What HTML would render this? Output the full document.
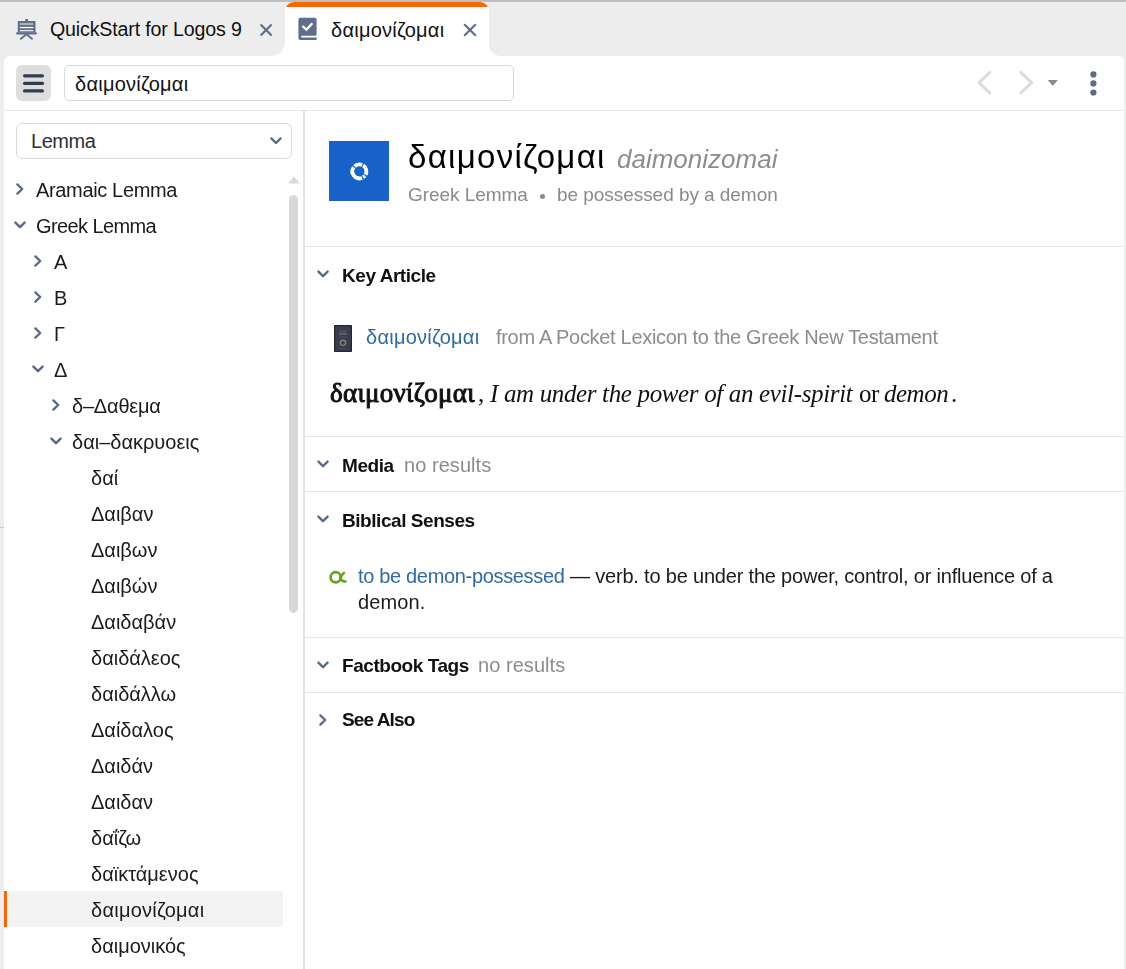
<!DOCTYPE html>
<html><head><meta charset="utf-8"><style>
html,body{margin:0;padding:0}
body{width:1126px;height:969px;overflow:hidden;position:relative;background:#ededed;font-family:"Liberation Sans", sans-serif}
.t{position:absolute;white-space:nowrap}
.g{will-change:transform}
.b{position:absolute}
svg.b{overflow:visible}
</style></head><body>
<div class="b" style="left:0px;top:0px;width:1126px;height:2px;background:#bebebe"></div>
<div class="b" style="left:265px;top:30px;width:245px;height:30px;background:#fff"></div>
<div class="b" style="left:0px;top:2px;width:285px;height:54px;background:#ededed;border-bottom-right-radius:14px"></div>
<div class="b" style="left:489px;top:2px;width:637px;height:54px;background:#ededed;border-bottom-left-radius:12px"></div>
<div class="b" style="left:285px;top:2px;width:204px;height:56px;background:#fff;border-radius:9px 9px 0 0;overflow:hidden"><div style="position:absolute;left:0;top:0;width:204px;height:5px;background:#f86600"></div></div>
<div class="b" style="left:4px;top:56px;width:1120px;height:913px;background:#fff;border-radius:6px 5px 0 0"></div>
<svg class="b" style="left:14px;top:17px" width="26" height="24" viewBox="14 17 26 24">
<g fill="#5f6e8a">
<rect x="25.3" y="19" width="2.7" height="2.4"/>
<rect x="17.8" y="21" width="17.7" height="11.6" rx="0.6"/>
<rect x="16.2" y="32.3" width="20.7" height="2.3" rx="0.8"/>
</g>
<rect x="19.8" y="23.1" width="13.5" height="1.8" fill="#b3bac8"/>
<rect x="19.8" y="26.9" width="13.5" height="1.3" fill="#fff"/>
<rect x="19.8" y="30.0" width="13.5" height="1.3" fill="#e8eaee"/>
<path d="M26.4 34.2 L20.9 38.8 M26.4 34.2 L32.0 38.8" stroke="#5f6e8a" stroke-width="1.9" stroke-linecap="round"/>
</svg>
<div class="t" style="left:50px;top:20.31px;font-family:'Liberation Sans', sans-serif;font-size:19.6px;line-height:19.6px;font-weight:normal;font-style:normal;color:#111;letter-spacing:-0.15px;">QuickStart for Logos 9</div>
<svg class="b" style="left:258px;top:22px" width="16" height="16" viewBox="0 0 16 16">
<path d="M2.6 2.4 L13.6 13.6 M13.6 2.4 L2.6 13.6" stroke="#5f6e8a" stroke-width="2.2"/></svg>
<svg class="b" style="left:296px;top:15px" width="24" height="28" viewBox="296 15 24 28">
<path d="M300.3 17.8 H315.1 Q316.6 17.8 316.6 19.3 V34.3 Q316.6 35.8 315.1 35.8 H301.3 V37.4 H316.6 V40 H300.3 Q298.4 40 298.4 38.1 V19.7 Q298.4 17.8 300.3 17.8 Z" fill="#5f6e8a"/>
<path d="M302.4 26 L306.4 29.6 L312.4 23.3" stroke="#fff" stroke-width="2.3" fill="none"/>
</svg>
<div class="t" style="left:331px;top:19.77px;font-family:'Liberation Sans', sans-serif;font-size:20px;line-height:20px;font-weight:normal;font-style:normal;color:#111;letter-spacing:0.25px;">δαιμονίζομαι</div>
<svg class="b" style="left:462px;top:22px" width="16" height="16" viewBox="0 0 16 16">
<path d="M2.2 2.2 L13.8 13.8 M13.8 2.2 L2.2 13.8" stroke="#5f6e8a" stroke-width="2.2"/></svg>
<div class="b" style="left:16px;top:65px;width:35px;height:36px;background:#dedede;border-radius:6px"></div>
<svg class="b" style="left:16px;top:65px" width="35" height="36" viewBox="16 65 35 36"><line x1="24.6" y1="75.8" x2="42.4" y2="75.8" stroke="#323c50" stroke-width="3.3" stroke-linecap="round"/><line x1="24.6" y1="83.4" x2="42.4" y2="83.4" stroke="#323c50" stroke-width="3.3" stroke-linecap="round"/><line x1="24.6" y1="90.9" x2="42.4" y2="90.9" stroke="#323c50" stroke-width="3.3" stroke-linecap="round"/></svg>
<div class="b" style="left:64px;top:65px;width:450px;height:36px;border:1px solid #d9d9d9;border-radius:5px;box-sizing:border-box;background:#fff"></div>
<div class="t" style="left:75px;top:73.97px;font-family:'Liberation Sans', sans-serif;font-size:20px;line-height:20px;font-weight:normal;font-style:normal;color:#111;letter-spacing:0.25px;">δαιμονίζομαι</div>
<svg class="b" style="left:970px;top:66px" width="100" height="34" viewBox="970 66 100 34">
<path d="M989.8 72.4 L979 82.7 L989.8 93" stroke="#dcdcdc" stroke-width="3" fill="none" stroke-linecap="round" stroke-linejoin="round"/>
<path d="M1020.8 72.4 L1031.6 82.7 L1020.8 93" stroke="#dcdcdc" stroke-width="3" fill="none" stroke-linecap="round" stroke-linejoin="round"/>
<path d="M1047.8 80 H1057.8 L1052.8 86 Z" fill="#8c8c8c"/>
</svg>
<svg class="b" style="left:1085px;top:66px" width="18" height="34" viewBox="1085 66 18 34"><circle cx="1093.4" cy="74.4" r="3.1" fill="#5b6a87"/><circle cx="1093.4" cy="83.4" r="3.1" fill="#5b6a87"/><circle cx="1093.4" cy="92.5" r="3.1" fill="#5b6a87"/></svg>
<div class="b" style="left:4px;top:110px;width:1120px;height:1px;background:#e6e6e6"></div>
<div class="b" style="left:303px;top:111px;width:2px;height:858px;background:#e3e3e3"></div>
<div class="b" style="left:16px;top:123px;width:276px;height:36px;border:1px solid #d9d9d9;border-radius:6px;box-sizing:border-box"></div>
<div class="t" style="left:31px;top:130.97px;font-family:'Liberation Sans', sans-serif;font-size:20px;line-height:20px;font-weight:normal;font-style:normal;color:#2b303b;letter-spacing:-0.45px;">Lemma</div>
<svg class="b" style="left:268px;top:134px" width="16" height="12" viewBox="268 134 16 12">
<path d="M271.3 138.4 L276 143 L280.6 138.4" stroke="#566783" stroke-width="2.2" fill="none" stroke-linecap="round" stroke-linejoin="round"/></svg>
<svg class="b" style="left:286px;top:174px" width="16" height="12" viewBox="286 174 16 12">
<path d="M288.2 183.6 L294 176.6 L299.8 183.6 Z" fill="#d9d9d9"/></svg>
<div class="b" style="left:289px;top:195px;width:9px;height:418px;background:#d8d8d8;border-radius:4.5px"></div>
<div class="b" style="left:0px;top:527px;width:4px;height:1px;background:#c6c6c6"></div>
<div class="b" style="left:4px;top:891px;width:279px;height:36px;background:#f3f3f3"></div>
<div class="b" style="left:4px;top:891px;width:3px;height:36px;background:#f86600"></div>
<svg class="b" style="left:14px;top:181.8px" width="12" height="14" viewBox="14 181.8 12 14"><path d="M17.4 184.20000000000002 L22.2 188.8 L17.4 193.4" stroke="#5a6b88" stroke-width="2.4" fill="none" stroke-linecap="round" stroke-linejoin="round"/></svg>
<div class="t g" style="left:36px;top:179.87px;font-family:'Liberation Sans', sans-serif;font-size:20px;line-height:20px;font-weight:normal;font-style:normal;color:#1b1b1b;letter-spacing:-0.35px;">Aramaic Lemma</div>
<svg class="b" style="left:13px;top:218.8px" width="14" height="12" viewBox="13 218.8 14 12"><path d="M15.4 222.4 L20 227.0 L24.6 222.4" stroke="#5a6b88" stroke-width="2.4" fill="none" stroke-linecap="round" stroke-linejoin="round"/></svg>
<div class="t g" style="left:36px;top:215.87px;font-family:'Liberation Sans', sans-serif;font-size:20px;line-height:20px;font-weight:normal;font-style:normal;color:#1b1b1b;letter-spacing:-0.6px;">Greek Lemma</div>
<svg class="b" style="left:32px;top:253.8px" width="12" height="14" viewBox="32 253.8 12 14"><path d="M35.4 256.2 L40.2 260.8 L35.4 265.40000000000003" stroke="#5a6b88" stroke-width="2.4" fill="none" stroke-linecap="round" stroke-linejoin="round"/></svg>
<div class="t g" style="left:54px;top:251.87px;font-family:'Liberation Sans', sans-serif;font-size:20px;line-height:20px;font-weight:normal;font-style:normal;color:#1b1b1b;letter-spacing:0px;">Α</div>
<svg class="b" style="left:32px;top:289.8px" width="12" height="14" viewBox="32 289.8 12 14"><path d="M35.4 292.2 L40.2 296.8 L35.4 301.40000000000003" stroke="#5a6b88" stroke-width="2.4" fill="none" stroke-linecap="round" stroke-linejoin="round"/></svg>
<div class="t g" style="left:54px;top:287.87px;font-family:'Liberation Sans', sans-serif;font-size:20px;line-height:20px;font-weight:normal;font-style:normal;color:#1b1b1b;letter-spacing:0px;">Β</div>
<svg class="b" style="left:32px;top:325.8px" width="12" height="14" viewBox="32 325.8 12 14"><path d="M35.4 328.2 L40.2 332.8 L35.4 337.40000000000003" stroke="#5a6b88" stroke-width="2.4" fill="none" stroke-linecap="round" stroke-linejoin="round"/></svg>
<div class="t g" style="left:54px;top:323.87px;font-family:'Liberation Sans', sans-serif;font-size:20px;line-height:20px;font-weight:normal;font-style:normal;color:#1b1b1b;letter-spacing:0px;">Γ</div>
<svg class="b" style="left:31px;top:362.8px" width="14" height="12" viewBox="31 362.8 14 12"><path d="M33.4 366.40000000000003 L38 371.0 L42.6 366.40000000000003" stroke="#5a6b88" stroke-width="2.4" fill="none" stroke-linecap="round" stroke-linejoin="round"/></svg>
<div class="t g" style="left:54px;top:359.87px;font-family:'Liberation Sans', sans-serif;font-size:20px;line-height:20px;font-weight:normal;font-style:normal;color:#1b1b1b;letter-spacing:0px;">Δ</div>
<svg class="b" style="left:50px;top:397.8px" width="12" height="14" viewBox="50 397.8 12 14"><path d="M53.4 400.2 L58.2 404.8 L53.4 409.40000000000003" stroke="#5a6b88" stroke-width="2.4" fill="none" stroke-linecap="round" stroke-linejoin="round"/></svg>
<div class="t g" style="left:72px;top:395.87px;font-family:'Liberation Sans', sans-serif;font-size:20px;line-height:20px;font-weight:normal;font-style:normal;color:#1b1b1b;letter-spacing:-0.2px;">δ–Δαθεμα</div>
<svg class="b" style="left:49px;top:434.8px" width="14" height="12" viewBox="49 434.8 14 12"><path d="M51.4 438.40000000000003 L56 443.0 L60.6 438.40000000000003" stroke="#5a6b88" stroke-width="2.4" fill="none" stroke-linecap="round" stroke-linejoin="round"/></svg>
<div class="t g" style="left:72px;top:431.87px;font-family:'Liberation Sans', sans-serif;font-size:20px;line-height:20px;font-weight:normal;font-style:normal;color:#1b1b1b;letter-spacing:0px;">δαι–δακρυοεις</div>
<div class="t g" style="left:90.7px;top:467.87px;font-family:'Liberation Sans', sans-serif;font-size:20px;line-height:20px;font-weight:normal;font-style:normal;color:#1b1b1b;letter-spacing:0px;">δαί</div>
<div class="t g" style="left:90.7px;top:503.87px;font-family:'Liberation Sans', sans-serif;font-size:20px;line-height:20px;font-weight:normal;font-style:normal;color:#1b1b1b;letter-spacing:0px;">Δαιβαν</div>
<div class="t g" style="left:90.7px;top:539.87px;font-family:'Liberation Sans', sans-serif;font-size:20px;line-height:20px;font-weight:normal;font-style:normal;color:#1b1b1b;letter-spacing:0px;">Δαιβων</div>
<div class="t g" style="left:90.7px;top:575.87px;font-family:'Liberation Sans', sans-serif;font-size:20px;line-height:20px;font-weight:normal;font-style:normal;color:#1b1b1b;letter-spacing:0px;">Δαιβών</div>
<div class="t g" style="left:90.7px;top:611.87px;font-family:'Liberation Sans', sans-serif;font-size:20px;line-height:20px;font-weight:normal;font-style:normal;color:#1b1b1b;letter-spacing:0px;">Δαιδαβάν</div>
<div class="t g" style="left:90.7px;top:647.87px;font-family:'Liberation Sans', sans-serif;font-size:20px;line-height:20px;font-weight:normal;font-style:normal;color:#1b1b1b;letter-spacing:0px;">δαιδάλεος</div>
<div class="t g" style="left:90.7px;top:683.87px;font-family:'Liberation Sans', sans-serif;font-size:20px;line-height:20px;font-weight:normal;font-style:normal;color:#1b1b1b;letter-spacing:0px;">δαιδάλλω</div>
<div class="t g" style="left:90.7px;top:719.87px;font-family:'Liberation Sans', sans-serif;font-size:20px;line-height:20px;font-weight:normal;font-style:normal;color:#1b1b1b;letter-spacing:0px;">Δαίδαλος</div>
<div class="t g" style="left:90.7px;top:755.87px;font-family:'Liberation Sans', sans-serif;font-size:20px;line-height:20px;font-weight:normal;font-style:normal;color:#1b1b1b;letter-spacing:0px;">Δαιδάν</div>
<div class="t g" style="left:90.7px;top:791.87px;font-family:'Liberation Sans', sans-serif;font-size:20px;line-height:20px;font-weight:normal;font-style:normal;color:#1b1b1b;letter-spacing:0px;">Δαιδαν</div>
<div class="t g" style="left:90.7px;top:827.87px;font-family:'Liberation Sans', sans-serif;font-size:20px;line-height:20px;font-weight:normal;font-style:normal;color:#1b1b1b;letter-spacing:0px;">δαΐζω</div>
<div class="t g" style="left:90.7px;top:863.87px;font-family:'Liberation Sans', sans-serif;font-size:20px;line-height:20px;font-weight:normal;font-style:normal;color:#1b1b1b;letter-spacing:0px;">δαϊκτάμενος</div>
<div class="t g" style="left:90.7px;top:899.87px;font-family:'Liberation Sans', sans-serif;font-size:20px;line-height:20px;font-weight:normal;font-style:normal;color:#1b1b1b;letter-spacing:0.25px;">δαιμονίζομαι</div>
<div class="t g" style="left:90.7px;top:935.87px;font-family:'Liberation Sans', sans-serif;font-size:20px;line-height:20px;font-weight:normal;font-style:normal;color:#1b1b1b;letter-spacing:0px;">δαιμονικός</div>
<div class="b" style="left:329px;top:141px;width:60px;height:60px;background:#1662c8"></div>
<svg class="b" style="left:347px;top:159px" width="25" height="25" viewBox="347 159 25 25"><path d="M354.54 166.36 A7 7 0 0 1 362.02 164.91 M363.11 165.46 A7 7 0 0 1 365.52 174.79 M364.84 175.81 A7 7 0 0 1 363.11 177.34 M362.02 177.89 A7 7 0 0 1 353.74 167.29" stroke="#fff" stroke-width="3.8" fill="none"/></svg>
<div class="t g" style="left:408px;top:140.36px;font-family:'Liberation Sans', sans-serif;font-size:33px;line-height:33px;font-weight:normal;font-style:normal;color:#000;letter-spacing:1.3px;">δαιμονίζομαι</div>
<div class="t g" style="left:617px;top:145.89px;font-family:'Liberation Sans', sans-serif;font-size:26px;line-height:26px;font-weight:normal;font-style:italic;color:#8c8c8c;letter-spacing:0px;">daimonizomai</div>
<div class="t g" style="left:407.5px;top:185.21px;font-family:'Liberation Sans', sans-serif;font-size:19px;line-height:19px;font-weight:normal;font-style:normal;color:#8a8a8a;letter-spacing:-0.05px;">Greek Lemma</div>
<div class="b" style="left:540.2px;top:194px;width:5px;height:5px;background:#8a8a8a;border-radius:50%"></div>
<div class="t g" style="left:557px;top:185.21px;font-family:'Liberation Sans', sans-serif;font-size:19px;line-height:19px;font-weight:normal;font-style:normal;color:#8a8a8a;letter-spacing:-0.05px;">be possessed by a demon</div>
<div class="b" style="left:305px;top:246px;width:819px;height:1px;background:#e6e6e6"></div>
<div class="b" style="left:305px;top:436px;width:819px;height:1px;background:#e6e6e6"></div>
<div class="b" style="left:305px;top:491px;width:819px;height:1px;background:#e6e6e6"></div>
<div class="b" style="left:305px;top:637px;width:819px;height:1px;background:#e6e6e6"></div>
<div class="b" style="left:305px;top:692px;width:819px;height:1px;background:#e6e6e6"></div>
<svg class="b" style="left:316px;top:267.7px" width="14" height="12" viewBox="316 267.7 14 12"><path d="M318.4 271.3 L323 275.9 L327.6 271.3" stroke="#5a6b88" stroke-width="2.4" fill="none" stroke-linecap="round" stroke-linejoin="round"/></svg>
<div class="t g" style="left:342px;top:265.81px;font-family:'Liberation Sans', sans-serif;font-size:19px;line-height:19px;font-weight:bold;font-style:normal;color:#111;letter-spacing:-0.45px;">Key Article</div>
<svg class="b" style="left:316px;top:457.8px" width="14" height="12" viewBox="316 457.8 14 12"><path d="M318.4 461.40000000000003 L323 466.0 L327.6 461.40000000000003" stroke="#5a6b88" stroke-width="2.4" fill="none" stroke-linecap="round" stroke-linejoin="round"/></svg>
<div class="t g" style="left:342px;top:455.91px;font-family:'Liberation Sans', sans-serif;font-size:19px;line-height:19px;font-weight:bold;font-style:normal;color:#111;letter-spacing:-0.45px;">Media</div>
<div class="t g" style="left:403.5px;top:455.07px;font-family:'Liberation Sans', sans-serif;font-size:20px;line-height:20px;font-weight:normal;font-style:normal;color:#8c8c8c;letter-spacing:0.05px;">no results</div>
<svg class="b" style="left:316px;top:513px" width="14" height="12" viewBox="316 513 14 12"><path d="M318.4 516.6 L323 521.2 L327.6 516.6" stroke="#5a6b88" stroke-width="2.4" fill="none" stroke-linecap="round" stroke-linejoin="round"/></svg>
<div class="t g" style="left:342px;top:510.61px;font-family:'Liberation Sans', sans-serif;font-size:19px;line-height:19px;font-weight:bold;font-style:normal;color:#111;letter-spacing:-0.45px;">Biblical Senses</div>
<svg class="b" style="left:316px;top:658.8px" width="14" height="12" viewBox="316 658.8 14 12"><path d="M318.4 662.4 L323 667.0 L327.6 662.4" stroke="#5a6b88" stroke-width="2.4" fill="none" stroke-linecap="round" stroke-linejoin="round"/></svg>
<div class="t g" style="left:342px;top:655.51px;font-family:'Liberation Sans', sans-serif;font-size:19px;line-height:19px;font-weight:bold;font-style:normal;color:#111;letter-spacing:-0.45px;">Factbook Tags</div>
<div class="t g" style="left:478.2px;top:654.67px;font-family:'Liberation Sans', sans-serif;font-size:20px;line-height:20px;font-weight:normal;font-style:normal;color:#8c8c8c;letter-spacing:0.05px;">no results</div>
<svg class="b" style="left:317px;top:713px" width="12" height="14" viewBox="317 713 12 14"><path d="M320.4 715.4 L325.2 720 L320.4 724.6" stroke="#5a6b88" stroke-width="2.4" fill="none" stroke-linecap="round" stroke-linejoin="round"/></svg>
<div class="t g" style="left:342px;top:709.91px;font-family:'Liberation Sans', sans-serif;font-size:19px;line-height:19px;font-weight:bold;font-style:normal;color:#111;letter-spacing:-0.9px;">See Also</div>
<svg class="b" style="left:334px;top:325px" width="18" height="27" viewBox="0 0 18 27">
<rect x="0" y="0" width="18" height="27" rx="0.8" fill="#24252f"/>
<rect x="1.2" y="1.2" width="15.6" height="24.6" fill="#3a3c52"/>
<rect x="5.5" y="5.5" width="7" height="1.2" fill="#5e5c5e"/>
<rect x="5" y="8" width="8" height="1.6" fill="#6a675f"/>
<rect x="6" y="11.5" width="6" height="1" fill="#55545a"/>
<circle cx="9" cy="17.8" r="2.6" fill="none" stroke="#8a7f60" stroke-width="1.4"/>
<rect x="6" y="23.2" width="6" height="0.8" fill="#504f55"/>
</svg>
<div class="t g" style="left:365.5px;top:326.87px;font-family:'Liberation Sans', sans-serif;font-size:20px;line-height:20px;font-weight:normal;font-style:normal;color:#2e6aa7;letter-spacing:0.25px;">δαιμονίζομαι</div>
<div class="t g" style="left:495.5px;top:326.87px;font-family:'Liberation Sans', sans-serif;font-size:20px;line-height:20px;font-weight:normal;font-style:normal;color:#8c8c8c;letter-spacing:-0.31px;">from A Pocket Lexicon to the Greek New Testament</div>
<div class="t g" style="left:330px;top:379.79px;font-family:'Liberation Serif', serif;font-size:27px;line-height:27px;font-weight:normal;font-style:normal;color:#111;letter-spacing:0.3px;-webkit-text-stroke:1px #111">δαιμονίζομαι</div>
<div class="t g" style="left:477.5px;top:380.86px;font-family:'Liberation Serif', serif;font-size:25px;line-height:25px;font-weight:normal;font-style:normal;color:#111;letter-spacing:0px;">,</div>
<div class="t g" style="left:489.5px;top:380.86px;font-family:'Liberation Serif', serif;font-size:25px;line-height:25px;font-weight:normal;font-style:italic;color:#111;letter-spacing:-0.35px;">I am under the power of an evil-spirit</div>
<div class="t g" style="left:858.5px;top:380.86px;font-family:'Liberation Serif', serif;font-size:25px;line-height:25px;font-weight:normal;font-style:normal;color:#111;letter-spacing:-0.4px;">or</div>
<div class="t g" style="left:884px;top:380.86px;font-family:'Liberation Serif', serif;font-size:25px;line-height:25px;font-weight:normal;font-style:italic;color:#111;letter-spacing:-0.5px;">demon</div>
<div class="t g" style="left:950.5px;top:380.86px;font-family:'Liberation Serif', serif;font-size:25px;line-height:25px;font-weight:normal;font-style:normal;color:#111;letter-spacing:0px;">.</div>
<svg class="b" style="left:325px;top:565px" width="25" height="25" viewBox="0 0 25 25">
<circle cx="10.7" cy="12.25" r="5.1" stroke="#62a617" stroke-width="2.65" fill="none"/>
<path d="M15.2 12.4 L18.9 7.7" stroke="#62a617" stroke-width="2.5" fill="none" stroke-linecap="round"/>
<path d="M15.3 12.6 Q16.4 16.6 20.6 16.4" stroke="#62a617" stroke-width="2.5" fill="none" stroke-linecap="round"/>
</svg>
<div class="t g" style="left:358.3px;top:565.67px;font-family:'Liberation Sans', sans-serif;font-size:20px;line-height:20px;font-weight:normal;font-style:normal;color:#2e6aa7;letter-spacing:-0.33px;">to be demon-possessed</div>
<div class="t g" style="left:570px;top:565.67px;font-family:'Liberation Sans', sans-serif;font-size:20px;line-height:20px;font-weight:normal;font-style:normal;color:#1b1b1b;letter-spacing:-0.19px;">— verb. to be under the power, control, or influence of a</div>
<div class="t g" style="left:358.3px;top:591.57px;font-family:'Liberation Sans', sans-serif;font-size:20px;line-height:20px;font-weight:normal;font-style:normal;color:#1b1b1b;letter-spacing:0.1px;">demon.</div>
</body></html>
